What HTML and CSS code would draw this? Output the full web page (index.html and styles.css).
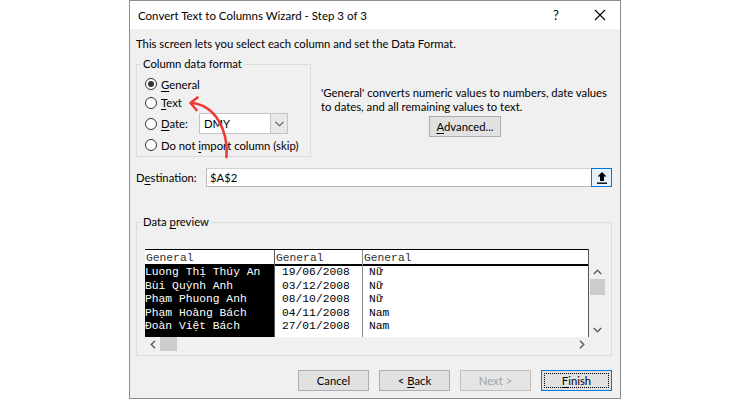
FILE: index.html
```html
<!DOCTYPE html>
<html>
<head>
<meta charset="utf-8">
<link rel="stylesheet" href="styles.css">
</head>
<body>
<div class="dialog">
  <div class="titlebar">
    <span class="title">Convert Text to Columns Wizard - Step 3 of 3</span>
    <span class="help">?</span>
    <span class="close"><svg width="12" height="12" viewBox="0 0 12 12"><path d="M1 1 L11 11 M11 1 L1 11" stroke="#000" stroke-width="1.1" fill="none"/></svg></span>
  </div>
  <div class="content">
    <p class="intro">This screen lets you select each column and set the Data Format.</p>
    <div class="format-row">
      <fieldset class="group format">
        <legend>Column data format</legend>
        <div class="opts">
          <div class="opt r1"><span class="radio checked"></span><span><u>G</u>eneral</span></div>
          <div class="opt r2"><span class="radio"></span><span><u>T</u>ext</span></div>
          <div class="opt r3"><span class="radio"></span><span class="date-lbl"><u>D</u>ate:</span>
            <span class="select"><span class="sel-val">DMY</span><span class="sel-btn"><svg width="9" height="6" viewBox="0 0 9 6"><path d="M0.5 0.8 L4.5 4.8 L8.5 0.8" stroke="#555" stroke-width="1.1" fill="none"/></svg></span></span>
          </div>
          <div class="opt r4"><span class="radio"></span><span>Do not <u>i</u>mport column (skip)</span></div>
        </div>
      </fieldset>
      <div class="desc">
        <p>'General' converts numeric values to numbers, date values<br>to dates, and all remaining values to text.</p>
        <button class="btn adv"><u>A</u>dvanced...</button>
      </div>
    </div>
    <div class="dest-row">
      <span class="dest-lbl">D<u>e</u>stination:</span>
      <div class="dest-input"><span class="dest-val">$A$2</span>
        <span class="dest-btn"><svg width="12" height="14" viewBox="0 0 12 14"><path d="M6 1 L10.5 5.5 L8 5.5 L8 10 L4 10 L4 5.5 L1.5 5.5 Z" fill="#000"/><rect x="1" y="11.5" width="10" height="1.4" fill="#000"/></svg></span>
      </div>
    </div>
    <fieldset class="group preview-group">
      <legend>Data <u>p</u>review</legend>
      <div class="preview">
        <div class="table">
          <div class="col c1">
            <div class="hd">General</div>
            <div class="cell">Luong Thị Thúy An</div>
            <div class="cell">Bùi Quỳnh Anh</div>
            <div class="cell">Phạm Phuong Anh</div>
            <div class="cell">Phạm Hoàng Bách</div>
            <div class="cell">Đoàn Việt Bách</div>
          </div>
          <div class="col c2">
            <div class="hd">General</div>
            <div class="cell">19/06/2008</div>
            <div class="cell">03/12/2008</div>
            <div class="cell">08/10/2008</div>
            <div class="cell">04/11/2008</div>
            <div class="cell">27/01/2008</div>
          </div>
          <div class="col c3">
            <div class="hd">General</div>
            <div class="cell">Nữ</div>
            <div class="cell">Nữ</div>
            <div class="cell">Nữ</div>
            <div class="cell">Nam</div>
            <div class="cell">Nam</div>
          </div>
        </div>
        <div class="vscroll">
          <span class="arrow"><svg width="9" height="6" viewBox="0 0 9 6"><path d="M0.8 5 L4.5 1.3 L8.2 5" stroke="#606060" stroke-width="1.5" fill="none"/></svg></span>
          <span class="vthumb"></span>
          <span class="vspace"></span>
          <span class="arrow"><svg width="9" height="6" viewBox="0 0 9 6"><path d="M0.8 1 L4.5 4.7 L8.2 1" stroke="#606060" stroke-width="1.5" fill="none"/></svg></span>
        </div>
        <div class="hscroll">
          <span class="harrow"><svg width="6" height="9" viewBox="0 0 6 9"><path d="M5 0.8 L1.3 4.5 L5 8.2" stroke="#606060" stroke-width="1.5" fill="none"/></svg></span>
          <span class="hthumb"></span>
          <span class="hspace"></span>
          <span class="harrow"><svg width="6" height="9" viewBox="0 0 6 9"><path d="M1 0.8 L4.7 4.5 L1 8.2" stroke="#606060" stroke-width="1.5" fill="none"/></svg></span>
        </div>
      </div>
    </fieldset>
    <div class="buttons">
      <button class="btn">Cancel</button>
      <button class="btn">&lt; <u>B</u>ack</button>
      <button class="btn disabled">Next &gt;</button>
      <button class="btn default"><span class="focus"><u>F</u>inish</span></button>
    </div>
  </div>
  <svg class="annot" width="750" height="400" viewBox="0 0 750 400">
    <path d="M226.5 157 C228.5 130 215 105 191.5 103" stroke="#ee3a35" stroke-width="2.6" fill="none" stroke-linecap="round"/>
    <path d="M197.5 97.5 L190.5 103 L196.5 110" stroke="#ee3a35" stroke-width="2.6" fill="none" stroke-linecap="round" stroke-linejoin="round"/>
  </svg>
</div>
</body>
</html>
```
FILE: styles.css
```css
* { box-sizing: border-box; }
html, body { margin: 0; padding: 0; background: #fff; }
body {
  font-family: Lato, "Noto Sans", sans-serif;
  font-size: 11.3px;
  color: #000;
  width: 750px;
  height: 400px;
  overflow: hidden;
  position: relative;
}
u { text-decoration: underline; text-underline-offset: 2px; }
.dialog {
  position: relative;
  margin-left: 129px;
  width: 492px;
  height: 399px;
  border: 1px solid #8c8c8c;
  background: #f0f0f0;
}
.titlebar {
  height: 28px;
  background: #fff;
  display: flex;
  align-items: center;
  padding-left: 8px;
  font-size: 11.5px;
}
.title { flex: 1; }
.help { width: 14px; text-align: center; font-size: 13px; margin-right: 31px; }
.close { width: 12px; height: 12px; margin-right: 14px; display: flex; }
.content { padding: 0 8px 0 6px; }
.intro { margin: 8px 0 0 0; line-height: 14px; height: 14px; }
.format-row { display: flex; margin-top: 6px; }
.group {
  margin: 0;
  border: 1px solid #dcdcdc;
  padding: 0;
  min-width: 0;
}
.group legend {
  padding: 0 2px;
  margin-left: 4px;
  line-height: 14px;
}
.format {
  width: 175px;
  height: 100px;
}
.opts { padding: 4px 0 0 8px; }
.opt { display: flex; align-items: center; white-space: nowrap; }
.r1 { height: 18px; }
.r2 { height: 19px; }
.r3 { height: 23px; }
.r4 { height: 20px; }
.radio {
  width: 12px; height: 12px;
  border: 1px solid #333;
  border-radius: 50%;
  background: #fff;
  margin-right: 4px;
  display: flex; align-items: center; justify-content: center;
  flex: none;
}
.radio.checked::after {
  content: "";
  width: 6px; height: 6px;
  border-radius: 50%;
  background: #333;
}
.date-lbl { width: 38px; }
.select {
  width: 89px; height: 21px;
  border: 1px solid #c4c4c4;
  background: #fff;
  display: flex;
}
.sel-val { flex: 1; padding-left: 4px; line-height: 19px; }
.sel-btn {
  width: 17px;
  border-left: 1px solid #c4c4c4;
  background: #e8e8e8;
  display: flex; align-items: center; justify-content: center;
}
.desc { margin-left: 10px; padding-top: 29px; white-space: nowrap; }
.desc p { margin: 0; line-height: 14px; }
.btn {
  font-family: inherit;
  font-size: 11.3px;
  color: #000;
  background: #e1e1e1;
  border: 1px solid #adadad;
  width: 71px;
  height: 21px;
  padding: 0;
  line-height: 19px;
}
.adv { margin: 2px 0 0 108px; width: 72px; }
.dest-row { display: flex; align-items: center; margin-top: 11px; height: 19px; }
.dest-lbl { width: 70px; }
.dest-input {
  flex: 1;
  height: 19px;
  background: #fff;
  border: 1px solid #b9b9b9;
  border-top-color: #d0d0d0;
  display: flex;
  align-items: center;
}
.dest-val { flex: 1; padding-left: 3px; }
.dest-btn {
  width: 21px; height: 19px;
  margin: -1px -1px -1px 0;
  border: 1px solid #0078d7;
  background: #e5f1fb;
  display: flex; align-items: center; justify-content: center;
}
.preview-group { margin-top: 28px; height: 141px; }
.preview {
  display: grid;
  grid-template-columns: 444px 16px;
  grid-template-rows: 88px 14px;
  margin: 20px 0 0 8px;
}
.table {
  display: flex;
  border-top: 1px solid #000;
  border-right: 1px solid #555;
  background: #fff;
  font-family: "Liberation Mono", "Courier New", monospace;
  font-size: 11.3px;
}
.col { display: flex; flex-direction: column; }
.hd {
  height: 16px;
  padding: 3px 0 0 1px;
  line-height: 11px;
  border-bottom: 2px solid #000;
  color: #333;
}
.cell { height: 13.6px; line-height: 13.6px; white-space: nowrap; }
.c1 { width: 129px; background: #000; color: #fff; }
.c1 .hd { background: #fff; color: #333; }
.c2 { width: 88px; border-left: 1px solid #555; }
.c2 .cell { padding-left: 7px; }
.c3 { flex: 1; border-left: 1px solid #888; }
.c3 .cell { padding-left: 6px; }
.vscroll { display: flex; flex-direction: column; padding-top: 15px; padding-left: 1px; }
.arrow { height: 15px; display: flex; align-items: center; justify-content: center; }
.vthumb { height: 16px; background: #cdcdcd; }
.vspace { flex: 1; }
.hscroll { display: flex; align-items: stretch; }
.harrow { width: 15px; display: flex; align-items: center; justify-content: center; }
.hthumb { width: 17px; background: #cdcdcd; }
.hspace { flex: 1; }
.buttons { display: flex; justify-content: flex-end; gap: 10px; margin-top: 14px; }
.disabled { color: #a0a0a0; border-color: #bfbfbf; background: #e5e5e5; }
.default { border: 1px solid #0078d7; padding: 2px; }
.focus {
  display: block;
  height: 100%;
  border: 1px dotted #000;
  line-height: 14px;
}
.annot { position: absolute; left: -130px; top: -1px; pointer-events: none; }
```
